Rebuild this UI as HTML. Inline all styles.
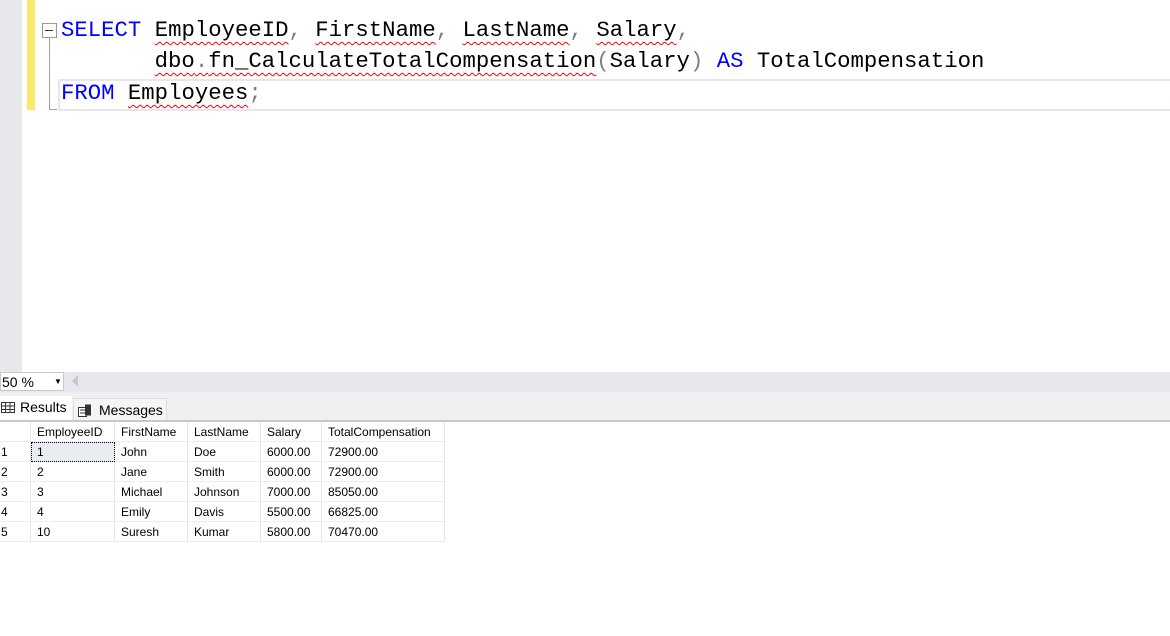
<!DOCTYPE html>
<html><head><meta charset="utf-8"><style>
body{margin:0;width:1170px;height:636px;position:relative;background:#fff;overflow:hidden;font-family:"Liberation Sans",sans-serif}
.a{position:absolute}
.code{font-family:"Liberation Mono",monospace;font-size:22.3px;white-space:pre;color:#000}
.k{color:#0000ff}.g{color:#808080}
.w{text-decoration:underline wavy #ff0000;text-decoration-thickness:1px;text-underline-offset:5px}
table{border-collapse:collapse;font-size:12px}
td{height:19px;padding:0 0 0 6px;border-right:1px solid #e6e6e6;border-bottom:1px solid #ededed;color:#000}
</style></head><body>
<div class="a" style="left:0;top:0;width:22px;height:372px;background:#e7e8ec"></div>
<div class="a" style="left:27px;top:0;width:8px;height:110px;background:#fce96a"></div>
<div class="a" style="left:58px;top:79px;width:1112px;height:28px;border:2px solid #e6e6ee;border-right:none"></div>
<div class="a" style="left:42px;top:23px;width:13px;height:13px;border:1px solid #999;background:#fff"></div>
<div class="a" style="left:45px;top:30px;width:8px;height:1px;background:#333"></div>
<div class="a" style="left:49px;top:38px;width:1px;height:72px;background:#a0a0a0"></div>
<div class="a" style="left:49px;top:109px;width:8px;height:1px;background:#a0a0a0"></div>
<div class="a code" style="left:61px;top:17px"><span class="k">SELECT</span> <span class="w">EmployeeID</span><span class="g">,</span> <span class="w">FirstName</span><span class="g">,</span> <span class="w">LastName</span><span class="g">,</span> <span class="w">Salary</span><span class="g">,</span></div>
<div class="a code" style="left:61px;top:48px">       <span class="w">dbo<span class="g">.</span>fn_CalculateTotalCompensation</span><span class="g">(</span>Salary<span class="g">)</span> <span class="k">AS</span> TotalCompensation</div>
<div class="a code" style="left:61px;top:80px"><span class="k">FROM</span> <span class="w">Employees</span><span class="g">;</span></div>
<div class="a" style="left:0;top:372px;width:1170px;height:20px;background:#e7e8ec"></div>
<div class="a" style="left:0;top:372px;width:64px;height:19px;background:#fff;border:1px solid #c8c8d0;box-sizing:border-box;font-size:14px;line-height:18px;padding-left:1px">50 %<span style="position:absolute;left:53px;top:0;font-size:8px">▼</span></div>
<div class="a" style="left:72px;top:375px;width:0;height:0;border-top:6px solid transparent;border-bottom:6px solid transparent;border-right:6px solid #c8c8d0"></div>
<div class="a" style="left:0;top:392px;width:1170px;height:29px;background:#f0f0f0"></div>
<div class="a" style="left:0;top:396px;width:72px;height:25px;background:#fff;font-size:14px;line-height:22px">
<svg class="a" style="left:1px;top:6px" width="14" height="11"><rect x="0.5" y="0.5" width="13" height="10" fill="none" stroke="#333"/><path d="M0 4H14M0 7.5H14M4.5 0V11M9 0V11" stroke="#333"/></svg>
<span style="position:absolute;left:20px">Results</span></div>
<div class="a" style="left:73px;top:398px;width:92px;height:22px;background:#f5f5f5;border:1px solid #ddd;border-bottom:none;font-size:14px;line-height:22px">
<svg class="a" style="left:4px;top:5px" width="15" height="13"><rect x="0.5" y="3.5" width="8" height="9" fill="#fff" stroke="#333"/><rect x="7" y="0.5" width="6" height="11" fill="#333"/><path d="M2 6H7M2 9H7" stroke="#333"/></svg>
<span style="position:absolute;left:25px">Messages</span></div>
<div class="a" style="left:0;top:420px;width:1170px;height:2px;background:#c8c8c8"></div>
<table class="a" style="left:0;top:422px">
<tr style="background:#fff"><td style="width:24px"></td><td style="width:77px">EmployeeID</td><td style="width:66px">FirstName</td><td style="width:66px">LastName</td><td style="width:54px">Salary</td><td style="width:116px">TotalCompensation</td></tr>
<tr><td style="padding-left:1px">1</td><td style="background:#e8ecf0;outline:1px dotted #000;outline-offset:-1px">1</td><td>John</td><td>Doe</td><td>6000.00</td><td>72900.00</td></tr>
<tr><td style="padding-left:1px">2</td><td>2</td><td>Jane</td><td>Smith</td><td>6000.00</td><td>72900.00</td></tr>
<tr><td style="padding-left:1px">3</td><td>3</td><td>Michael</td><td>Johnson</td><td>7000.00</td><td>85050.00</td></tr>
<tr><td style="padding-left:1px">4</td><td>4</td><td>Emily</td><td>Davis</td><td>5500.00</td><td>66825.00</td></tr>
<tr><td style="padding-left:1px">5</td><td>10</td><td>Suresh</td><td>Kumar</td><td>5800.00</td><td>70470.00</td></tr>
</table>
</body></html>
